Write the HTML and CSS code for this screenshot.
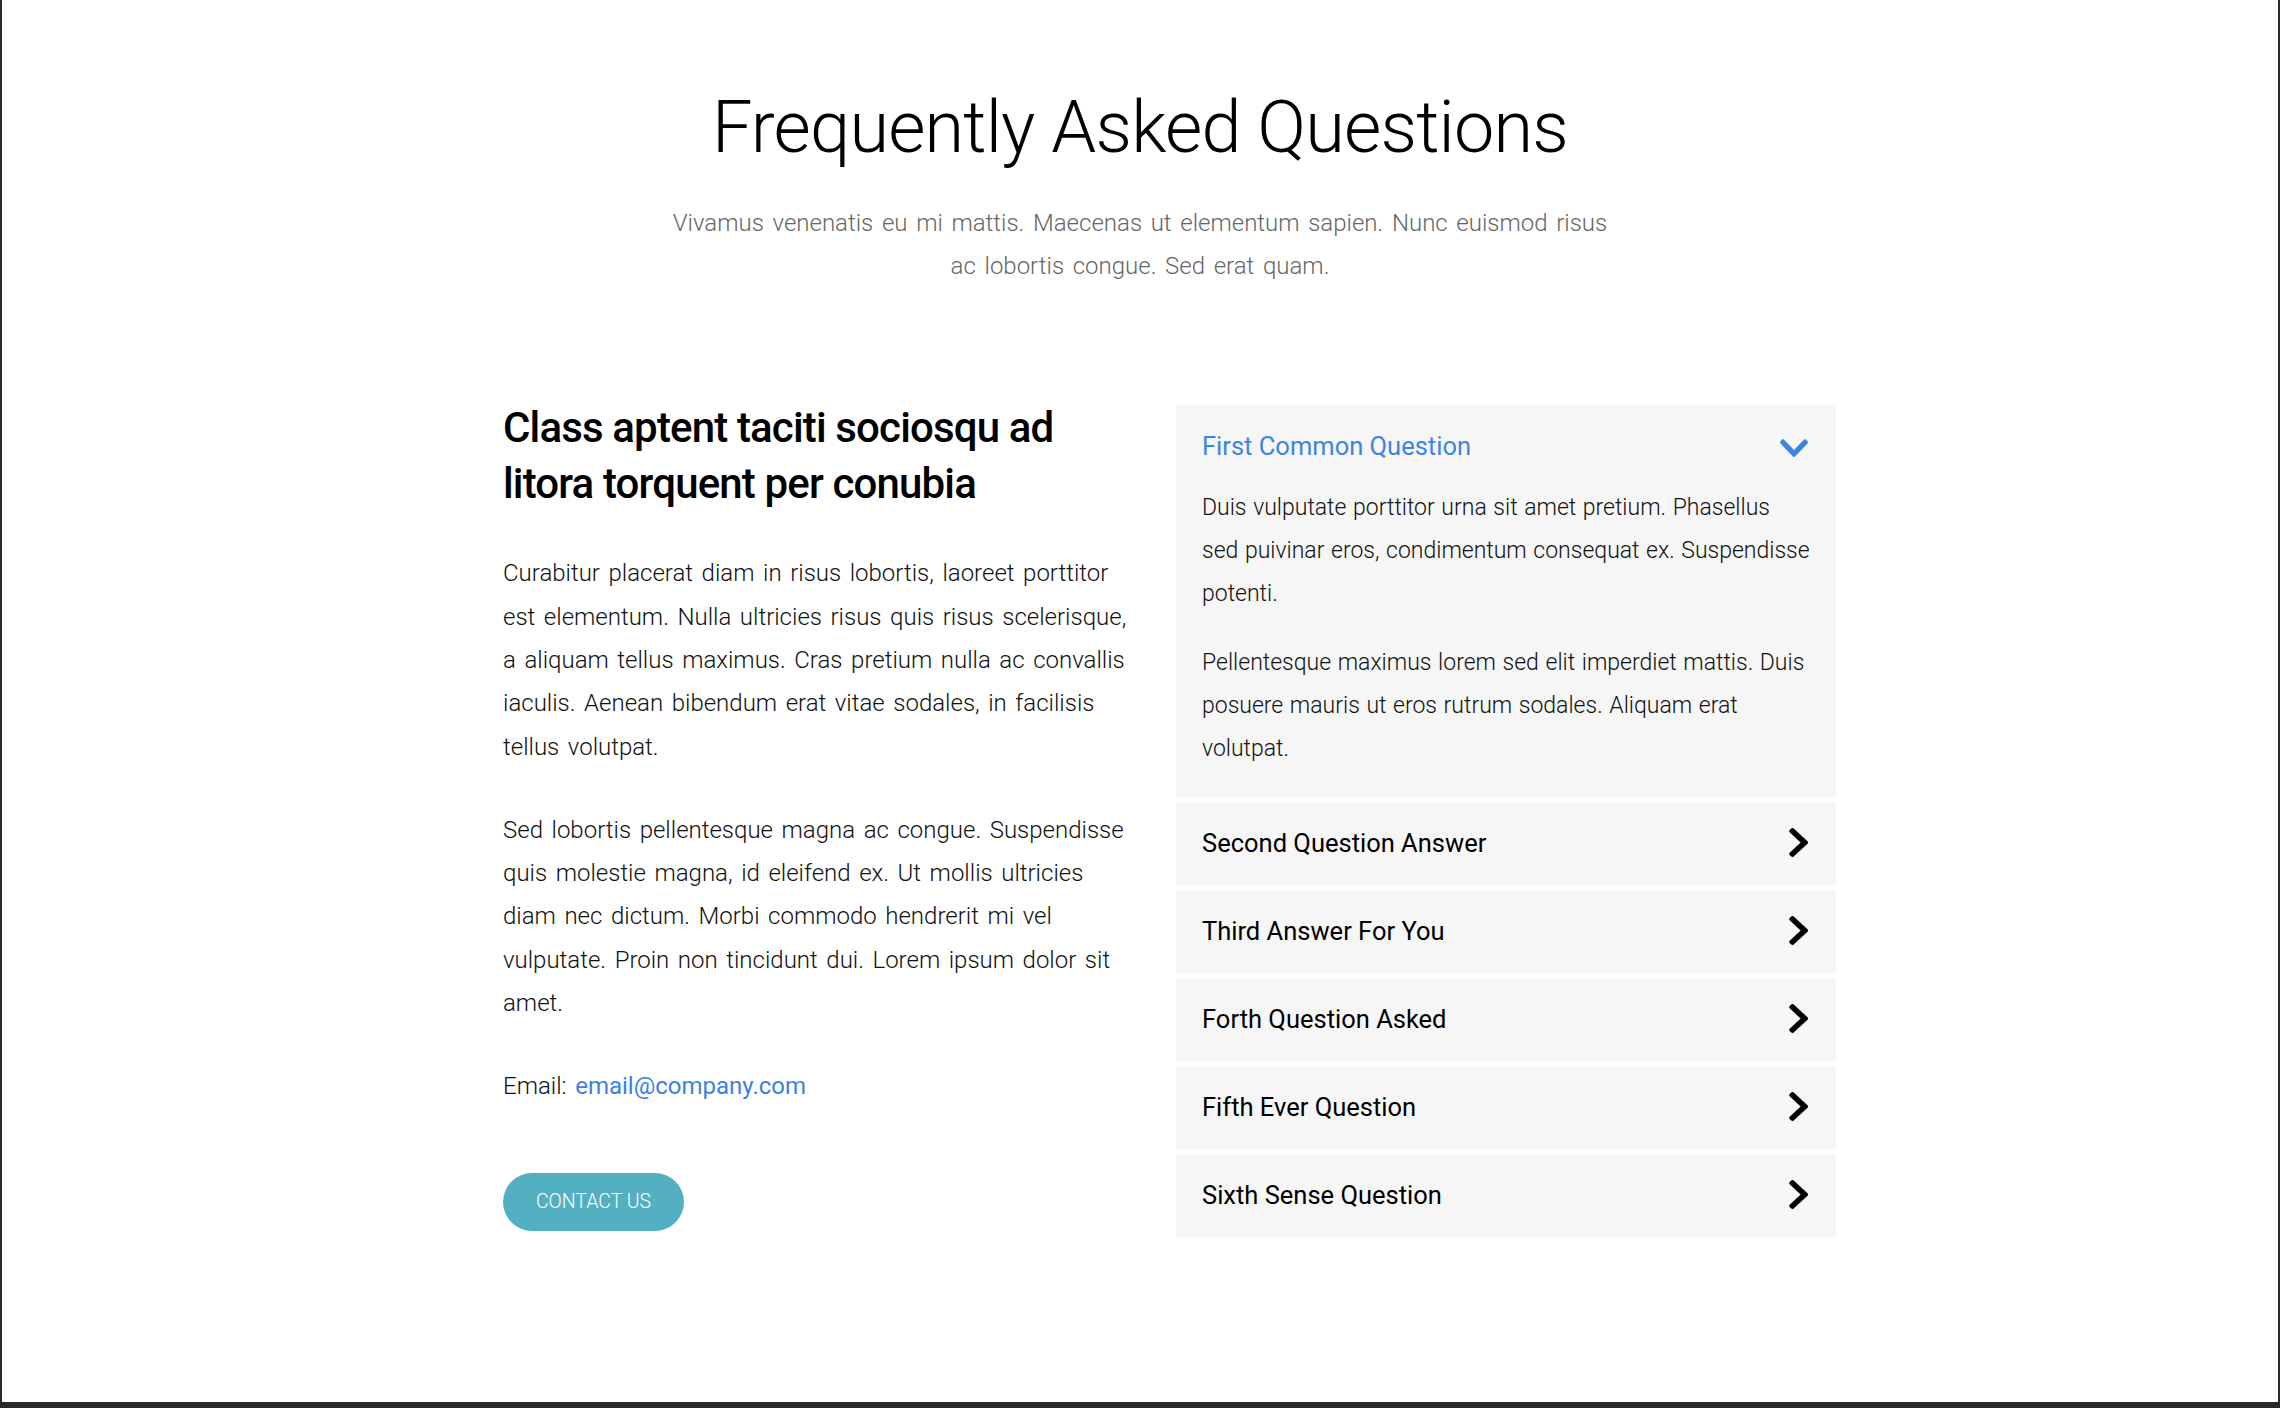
FILE: index.html
```html
<!DOCTYPE html>
<html lang="en">
<head>
<meta charset="utf-8">
<title>Frequently Asked Questions</title>
<link rel="stylesheet" href="styles.css">
</head>
<body>
<div class="frame">
  <header class="intro">
    <h1 class="intro-title">Frequently Asked Questions</h1>
    <p class="intro-text">Vivamus venenatis eu mi mattis. Maecenas ut elementum sapien. Nunc euismod risus ac lobortis congue. Sed erat quam.</p>
  </header>

  <section class="faq">
    <div class="faq-info">
      <h2 class="info-title">Class aptent taciti sociosqu ad litora torquent per conubia</h2>
      <p class="info-text">Curabitur placerat diam in risus lobortis, laoreet porttitor est elementum. Nulla ultricies risus quis risus scelerisque, a aliquam tellus maximus. Cras pretium nulla ac convallis iaculis. Aenean bibendum erat vitae sodales, in facilisis tellus volutpat.</p>
      <p class="info-text">Sed lobortis pellentesque magna ac congue. Suspendisse quis molestie magna, id eleifend ex. Ut mollis ultricies diam nec dictum. Morbi commodo hendrerit mi vel vulputate. Proin non tincidunt dui. Lorem ipsum dolor sit amet.</p>
      <p class="info-text">Email: <a class="info-link" href="#">email@company.com</a></p>
      <a class="contact-btn" href="#">CONTACT US</a>
    </div>

    <div class="accordion">
      <div class="acc-item acc-open">
        <div class="acc-head">
          <span class="acc-title acc-title-active">First Common Question</span>
          <svg class="icon-down" viewBox="5 121 438 267" preserveAspectRatio="none"><path d="M207.029 381.476L12.686 187.132c-9.373-9.373-9.373-24.569 0-33.941l22.667-22.667c9.357-9.357 24.522-9.375 33.901-.04L224 284.505l154.745-154.021c9.379-9.335 24.544-9.317 33.901.04l22.667 22.667c9.373 9.373 9.373 24.569 0 33.941L240.971 381.476c-9.373 9.372-24.569 9.372-33.942 0z"/></svg>
        </div>
        <div class="acc-body">
          <p class="acc-text">Duis vulputate porttitor urna sit amet pretium. Phasellus sed puivinar eros, condimentum consequat ex. Suspendisse potenti.</p>
          <p class="acc-text">Pellentesque maximus lorem sed elit imperdiet mattis. Duis posuere mauris ut eros rutrum sodales. Aliquam erat volutpat.</p>
        </div>
      </div>
      <div class="acc-item">
        <div class="acc-head acc-head-closed">
          <span class="acc-title">Second Question Answer</span>
          <svg class="icon-right" viewBox="25 38 267 436" preserveAspectRatio="none"><path d="M285.476 272.971L91.132 467.314c-9.373 9.373-24.569 9.373-33.941 0l-22.667-22.667c-9.357-9.357-9.375-24.522-.04-33.901L188.505 256 34.484 101.255c-9.335-9.379-9.317-24.544.04-33.901l22.667-22.667c9.373-9.373 24.569-9.373 33.941 0L285.475 239.030c9.373 9.372 9.373 24.568.001 33.941z"/></svg>
        </div>
      </div>
      <div class="acc-item">
        <div class="acc-head acc-head-closed">
          <span class="acc-title">Third Answer For You</span>
          <svg class="icon-right" viewBox="25 38 267 436" preserveAspectRatio="none"><path d="M285.476 272.971L91.132 467.314c-9.373 9.373-24.569 9.373-33.941 0l-22.667-22.667c-9.357-9.357-9.375-24.522-.04-33.901L188.505 256 34.484 101.255c-9.335-9.379-9.317-24.544.04-33.901l22.667-22.667c9.373-9.373 24.569-9.373 33.941 0L285.475 239.030c9.373 9.372 9.373 24.568.001 33.941z"/></svg>
        </div>
      </div>
      <div class="acc-item">
        <div class="acc-head acc-head-closed">
          <span class="acc-title">Forth Question Asked</span>
          <svg class="icon-right" viewBox="25 38 267 436" preserveAspectRatio="none"><path d="M285.476 272.971L91.132 467.314c-9.373 9.373-24.569 9.373-33.941 0l-22.667-22.667c-9.357-9.357-9.375-24.522-.04-33.901L188.505 256 34.484 101.255c-9.335-9.379-9.317-24.544.04-33.901l22.667-22.667c9.373-9.373 24.569-9.373 33.941 0L285.475 239.030c9.373 9.372 9.373 24.568.001 33.941z"/></svg>
        </div>
      </div>
      <div class="acc-item">
        <div class="acc-head acc-head-closed">
          <span class="acc-title">Fifth Ever Question</span>
          <svg class="icon-right" viewBox="25 38 267 436" preserveAspectRatio="none"><path d="M285.476 272.971L91.132 467.314c-9.373 9.373-24.569 9.373-33.941 0l-22.667-22.667c-9.357-9.357-9.375-24.522-.04-33.901L188.505 256 34.484 101.255c-9.335-9.379-9.317-24.544.04-33.901l22.667-22.667c9.373-9.373 24.569-9.373 33.941 0L285.475 239.030c9.373 9.372 9.373 24.568.001 33.941z"/></svg>
        </div>
      </div>
      <div class="acc-item">
        <div class="acc-head acc-head-closed">
          <span class="acc-title">Sixth Sense Question</span>
          <svg class="icon-right" viewBox="25 38 267 436" preserveAspectRatio="none"><path d="M285.476 272.971L91.132 467.314c-9.373 9.373-24.569 9.373-33.941 0l-22.667-22.667c-9.357-9.357-9.375-24.522-.04-33.901L188.505 256 34.484 101.255c-9.335-9.379-9.317-24.544.04-33.901l22.667-22.667c9.373-9.373 24.569-9.373 33.941 0L285.475 239.030c9.373 9.372 9.373 24.568.001 33.941z"/></svg>
        </div>
      </div>
    </div>
  </section>
</div>
</body>
</html>
```

FILE: styles.css
```css
* {
  box-sizing: border-box;
}

html, body {
  margin: 0;
  padding: 0;
  background: #27282a;
}

body {
  font-family: Roboto, "Liberation Sans", Arial, sans-serif;
  color: #000;
}

.frame {
  width: 2280px;
  height: 1408px;
  background: #fff;
  border-left: 2px solid #27282a;
  border-right: 2px solid #27282a;
  border-bottom: 6px solid #27282a;
  overflow: hidden;
}

.intro {
  text-align: center;
  padding-top: 85px;
}

.intro-title {
  margin: 0;
  font-size: 72px;
  font-weight: 300;
  line-height: 1.2;
  letter-spacing: -0.8px;
  color: #000;
}

.intro-text {
  margin: 31px auto 0;
  max-width: 950px;
  font-size: 24px;
  font-weight: 300;
  line-height: 43px;
  word-spacing: 2.8px;
  color: #666;
}

.faq {
  display: grid;
  grid-template-columns: 632px 660px;
  column-gap: 41px;
  width: 1333px;
  margin: 112px 0 0 calc(50% - 637px);
  align-items: start;
}

.faq-info {
  display: flex;
  flex-direction: column;
  align-items: flex-start;
}

.info-title {
  margin: 0;
  font-size: 42px;
  font-weight: 500;
  line-height: 56px;
  letter-spacing: -0.85px;
  color: #000;
}

.info-text {
  margin: 40px 0 0;
  font-size: 24px;
  font-weight: 300;
  line-height: 43.3px;
  word-spacing: 2.7px;
  color: #111;
}

.info-link {
  color: #3b82e0;
  font-weight: 400;
  word-spacing: 0;
  text-decoration: none;
}

.contact-btn {
  margin-top: 64px;
  width: 181px;
  height: 58px;
  border-radius: 29px;
  background: #53b0c2;
  color: #fff;
  font-size: 19.5px;
  font-weight: 300;
  text-decoration: none;
  display: flex;
  align-items: center;
  justify-content: center;
}

.accordion {
  margin-top: 5px;
  display: flex;
  flex-direction: column;
  gap: 5px;
}

.acc-item {
  background: #f6f6f6;
}

.acc-head {
  display: flex;
  align-items: center;
  justify-content: space-between;
  padding: 20px 28px 20px 26px;
  height: 81px;
}

.acc-head-closed {
  height: 83px;
  padding-top: 0;
  padding-bottom: 2px;
}

.acc-title {
  font-size: 25.5px;
  font-weight: 400;
  line-height: 40px;
  color: #000;
}

.acc-title-active {
  color: #3b86e0;
}

.icon-down {
  width: 28px;
  height: 18px;
  fill: #3b86e0;
  margin-top: 4px;
}

.icon-right {
  width: 19px;
  height: 29px;
  fill: #000;
}

.acc-body {
  padding: 0 26px 27px 26px;
}

.acc-text {
  margin: 26px 0 0;
  font-size: 23px;
  font-weight: 300;
  line-height: 43px;
  word-spacing: 1px;
  color: #111;
}

.acc-text:first-child {
  margin-top: 0;
}
```
